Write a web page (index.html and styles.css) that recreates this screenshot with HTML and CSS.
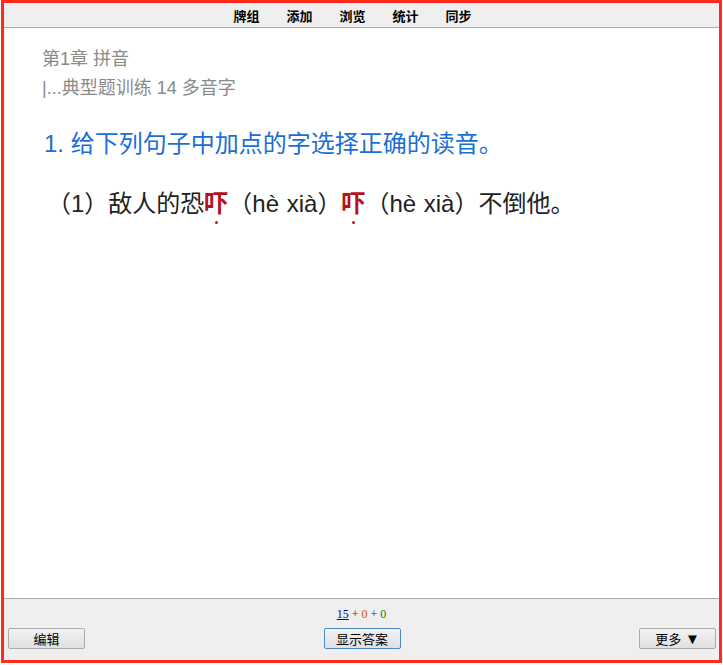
FILE: index.html
```html
<!DOCTYPE html>
<html lang="zh">
<head>
  <meta charset="UTF-8" />
  <title>复习</title>
  <link rel="stylesheet" href="styles.css">
</head>
<body>
  <div class="frame">
    <div class="topbar">
      <a href="#">牌组</a>
      <a href="#">添加</a>
      <a href="#">浏览</a>
      <a href="#">统计</a>
      <a href="#">同步</a>
    </div>

    <div class="card">
      <div class="crumb">第1章 拼音</div>
      <div class="crumb">|...典型题训练 14 多音字</div>

      <div class="question">1. 给下列句子中加点的字选择正确的读音。</div>

      <div class="sentence">（1）敌人的恐<span class="dot">吓</span>（hè xià）<span class="dot">吓</span>（hè xià）不倒他。</div>
    </div>

    <div class="bottombar">
      <div class="counts"><u class="new">15</u> + <span class="learn">0</span> + <span class="due">0</span></div>
      <div class="buttons">
        <button>编辑</button>
        <button class="main">显示答案</button>
        <button>更多 <span class="arrow">▼</span></button>
      </div>
    </div>
  </div>
</body>
</html>
```

FILE: styles.css
```css
html, body {
  margin: 0;
  height: 100%;
  background: #ffffff;
}

body {
  font-family: "Liberation Sans", "Noto Sans CJK SC", sans-serif;
}

.frame {
  box-sizing: border-box;
  height: 663px;
  margin: 0 1px;
  border: 3px solid #ff2a1a;
  display: flex;
  flex-direction: column;
}

.topbar {
  height: 24px;
  background: #efefef;
  border-bottom: 1px solid #aaaaaa;
  display: flex;
  justify-content: center;
  align-items: center;
  gap: 27px;
  padding-right: 18px;
}

.topbar a {
  color: #000;
  font-size: 13px;
  font-weight: bold;
  text-decoration: none;
}

.card {
  flex: 1;
  padding: 17px 40px 0 38px;
}

.crumb {
  color: #8a8a8a;
  font-size: 18px;
  line-height: 29px;
}

.question {
  color: #1a6ed8;
  font-size: 24px;
  line-height: 30px;
  margin-top: 26px;
  padding-left: 2px;
}

.sentence {
  color: #222;
  font-size: 24px;
  line-height: 30px;
  margin-top: 30px;
  margin-left: 5px;
  word-spacing: 1px;
}

.dot {
  position: relative;
  color: #b5121b;
  font-weight: bold;
}

.dot::after {
  content: "";
  position: absolute;
  left: 50%;
  bottom: -7px;
  width: 3px;
  height: 3px;
  margin-left: -1px;
  border-radius: 50%;
  background: #c0161e;
}

.bottombar {
  height: 61px;
  background: #efefef;
  border-top: 1px solid #aaaaaa;
  display: flex;
  flex-direction: column;
  align-items: center;
}

.counts {
  font-family: "Liberation Serif", "Noto Sans CJK SC", serif;
  font-size: 12px;
  margin-top: 9px;
  line-height: 13px;
  color: #333;
}

.new {
  color: #0000aa;
}

.learn {
  color: #c35617;
}

.due {
  color: #008800;
}

.buttons {
  align-self: stretch;
  display: flex;
  justify-content: space-between;
  padding: 0 3px 0 4px;
  margin-top: 7px;
}

button {
  width: 77px;
  height: 21px;
  padding: 0;
  font-family: "Liberation Sans", "Noto Sans CJK SC", sans-serif;
  font-size: 13px;
  color: #000;
  border: 1px solid #acacac;
  border-radius: 2px;
  background: linear-gradient(#f2f2f2, #e0e0e0);
}

button.main {
  border-color: #4a8ac4;
}

.arrow {
  font-size: 15px;
}
```
